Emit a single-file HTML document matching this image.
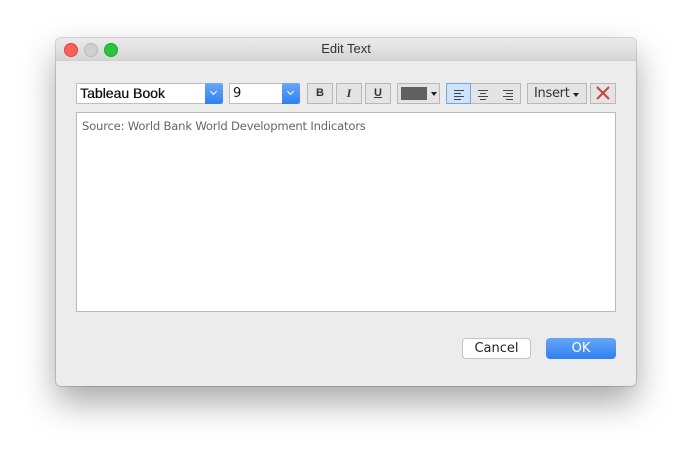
<!DOCTYPE html><html><head><style>
body{margin:0;width:692px;height:460px;background:#fff;font-family:"Liberation Sans",sans-serif;position:relative;overflow:hidden}
.win{position:absolute;left:56px;top:38px;width:580px;height:348px;background:#ececec;border-radius:5px;box-shadow:0 16px 34px rgba(0,0,0,.35),0 0 0 1px rgba(0,0,0,.15)}
.tb{height:22px;border-bottom:1px solid #d0d0d0;background:linear-gradient(#ebebeb,#d6d6d6);border-radius:5px 5px 0 0;text-align:center;font-size:13px;line-height:22px;color:#333}
.dot{position:absolute;top:5px;width:12px;height:12px;border-radius:50%}
.a{position:absolute;box-sizing:border-box}
.btn{background:#e4e4e4;border:1px solid #b8b8b8;font-size:12px;text-align:center;line-height:19px;color:#333}
.sel{background:#fff;border:1px solid #bdbdbd;font-size:14px;line-height:19px;padding-left:3px;color:#111}
.arr{position:absolute;right:-1px;top:-1px;width:18px;height:21px;background:linear-gradient(#6aa8f8,#2f7ff0);border-radius:0 3px 3px 0}
.arr:after{content:"";position:absolute;left:6px;top:6px;width:4px;height:4px;border-right:1.5px solid #fff;border-bottom:1.5px solid #fff;transform:rotate(45deg)}
.ln{position:absolute;left:7px;height:1px;background:#444}
</style></head><body>
<div class="win"><div class="tb">Edit Text</div>
<div class="dot" style="left:8px;background:#fc5f57;border:.5px solid #e0443e"></div>
<div class="dot" style="left:28px;background:#d0d0d0;border:.5px solid #bbb"></div>
<div class="dot" style="left:48px;background:#29c33f;border:.5px solid #1aab29"></div>
</div>
<div class="a sel" style="left:76px;top:83px;width:147px;height:21px;font-size:14px;text-shadow:0.3px 0 0 #111">Tableau Book<div class="arr"></div></div>
<div class="a sel" style="left:229px;top:83px;width:71px;height:21px;font-family:'DejaVu Sans';font-size:13px">9<div class="arr"></div></div>
<div class="a btn" style="left:307px;top:83px;width:26px;height:21px;font-weight:bold;font-size:11px">B</div>
<div class="a btn" style="left:336px;top:83px;width:26px;height:21px;font-style:italic;font-family:'Liberation Serif';font-weight:bold">I</div>
<div class="a btn" style="left:365px;top:83px;width:26px;height:21px;text-decoration:underline;font-weight:bold;font-size:11px">U</div>
<div class="a btn" style="left:397px;top:83px;width:43px;height:21px"><div style="position:absolute;left:3px;top:3px;width:26px;height:13px;background:#606060"></div><div style="position:absolute;left:33px;top:8px;border:3.5px solid transparent;border-top:4px solid #222"></div></div>
<div class="a btn" style="left:446px;top:83px;width:75px;height:21px"></div>
<div class="a" style="left:446px;top:83px;width:25px;height:21px;background:#cfe4fb;border:1px solid #6fa7e8"></div>
<div class="a" style="left:446px;top:83px;width:75px;height:21px">
<div class="ln" style="top:7px;width:10px;left:8px"></div><div class="ln" style="top:10px;width:7px;left:8px"></div><div class="ln" style="top:13px;width:10px;left:8px"></div><div class="ln" style="top:16px;width:7px;left:8px"></div>
<div class="ln" style="top:7px;width:10px;left:32px"></div><div class="ln" style="top:10px;width:6px;left:34px"></div><div class="ln" style="top:13px;width:10px;left:32px"></div><div class="ln" style="top:16px;width:6px;left:34px"></div>
<div class="ln" style="top:7px;width:10px;left:57px"></div><div class="ln" style="top:10px;width:7px;left:60px"></div><div class="ln" style="top:13px;width:10px;left:57px"></div><div class="ln" style="top:16px;width:7px;left:60px"></div></div>
<div class="a btn" style="left:527px;top:83px;width:60px;height:21px;font-size:13px;text-align:left;padding-left:6px;font-family:'DejaVu Sans';letter-spacing:-0.3px">Insert<span style="position:absolute;left:45px;top:9px;border:3.5px solid transparent;border-top:4px solid #222"></span></div>
<div class="a btn" style="left:590px;top:83px;width:26px;height:21px"><svg width="24" height="19" style="position:absolute;left:0;top:0"><path d="M6 3L18 15M18 3L6 15" stroke="#c6463a" stroke-width="2"/></svg></div>
<div class="a" style="left:76px;top:112px;width:540px;height:200px;background:#fff;border:1px solid #b9b9b9;font-size:11.6px;font-family:'DejaVu Sans';letter-spacing:-0.2px;color:#666;padding:6px 0 0 5px">Source: World Bank World Development Indicators</div>
<div class="a" style="left:462px;top:338px;width:69px;height:21px;background:#fff;border:1px solid #c4c4c4;border-radius:4px;font-size:13px;text-align:center;line-height:19px;color:#222;font-family:'DejaVu Sans'">Cancel</div>
<div class="a" style="left:546px;top:338px;width:70px;height:21px;background:linear-gradient(#66a6f8,#2f7ff0);border-radius:4px;font-size:13px;text-align:center;line-height:21px;color:#fff;font-family:'DejaVu Sans'">OK</div>
</body></html>
